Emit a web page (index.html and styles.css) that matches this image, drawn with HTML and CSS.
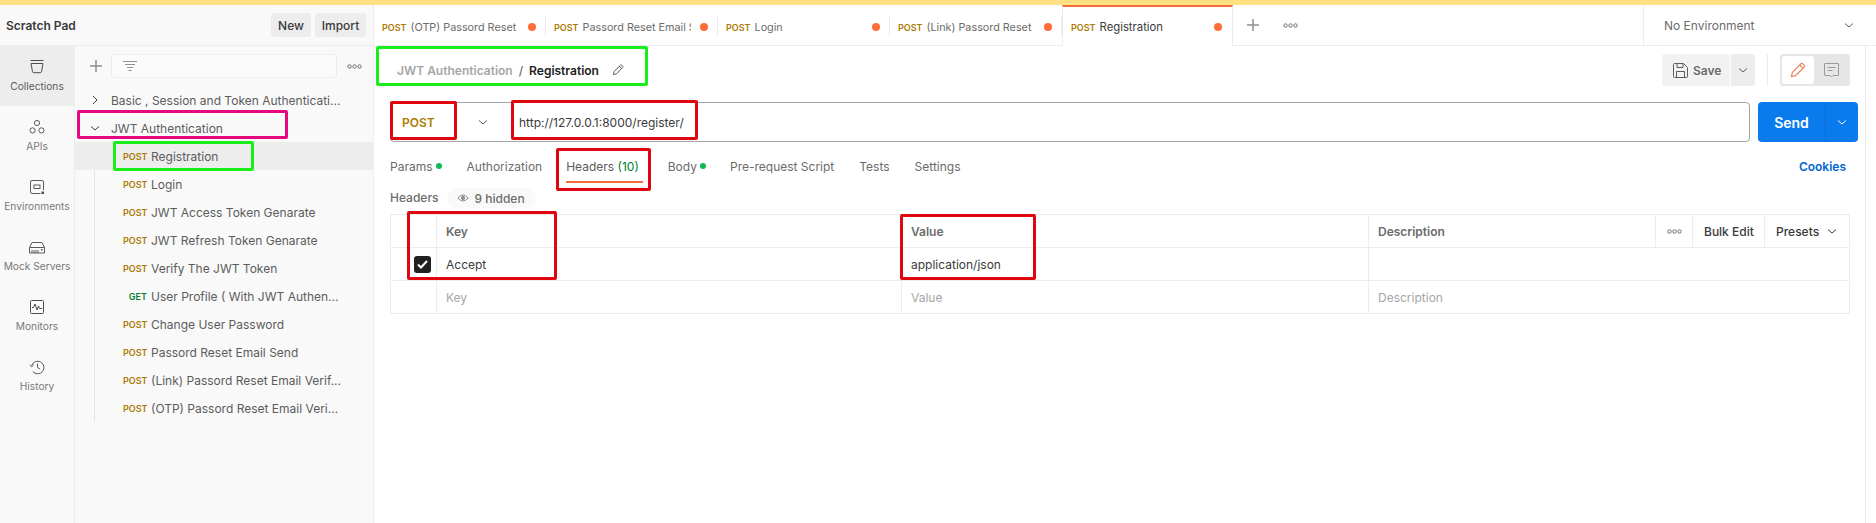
FILE: index.html
```html
<!DOCTYPE html>
<html lang="en">
<head>
    <meta charset="UTF-8">
    <meta name="viewport" content="width=device-width, initial-scale=1.0">
    <title>Scratch Pad</title>
    <link rel="stylesheet" href="styles.css">
</head>
<body>
    <div class="topbar"></div>

    <div class="app">
        <!-- Left column -->
        <div class="left">
            <div class="left-head">
                <span class="pad-title">Scratch Pad</span>
                <div class="head-btns">
                    <button class="btn-new">New</button>
                    <button class="btn-import">Import</button>
                </div>
            </div>
            <div class="left-body">
                <!-- Icon rail -->
                <div class="rail">
                    <div class="rail-item active">
                        <svg width="16" height="16" viewBox="0 0 16 16" fill="none" stroke="#4d4d4d"><path d="M1.5 1.5h13M2 4.5h12l-1.5 8.2q-.2 1-1.2 1H4.700q-1 0-1.200-1z"/></svg>
                        <span>Collections</span>
                    </div>
                    <div class="rail-item">
                        <svg width="16" height="16" viewBox="0 0 16 16" fill="none" stroke="#5c5c5c"><circle cx="8" cy="4" r="2.600"/><circle cx="3.600" cy="11.400" r="2.600"/><circle cx="12.400" cy="11.400" r="2.600"/></svg>
                        <span>APIs</span>
                    </div>
                    <div class="rail-item">
                        <svg width="16" height="16" viewBox="0 0 16 16" fill="none" stroke="#5c5c5c"><path d="M11.500 14.500H3q-1.500 0-1.500-1.500V3q0-1.500 1.500-1.500h10q1.500 0 1.500 1.500v8"/><rect x="5" y="6" width="6" height="3.500"/><rect x="12.500" y="12.500" width="2.500" height="2.500" fill="#4d4d4d" stroke="none"/></svg>
                        <span>Environments</span>
                    </div>
                    <div class="rail-item">
                        <svg width="16" height="16" viewBox="0 0 16 16" fill="none" stroke="#5c5c5c"><path d="M.5 8.500 3 3.500h10l2.500 5v5.500H.5zM.5 8.500h15M3 14v-3M5 14v-3M7 14v-3M9 14v-3"/><rect x="12" y="10" width="1.500" height="1.500" fill="#4d4d4d" stroke="none"/></svg>
                        <span>Mock Servers</span>
                    </div>
                    <div class="rail-item">
                        <svg width="16" height="16" viewBox="0 0 16 16" fill="none" stroke="#4d4d4d"><rect x="1.500" y="1.500" width="13" height="13" rx="1"/><path d="M3 8.500h1.500L6 5l2 6 1.500-4 1 2.500H13"/></svg>
                        <span>Monitors</span>
                    </div>
                    <div class="rail-item">
                        <svg width="16" height="16" viewBox="0 0 16 16" fill="none" stroke="#5c5c5c"><path d="M2.700 6.500A6.300 6.300 0 1 1 3.800 12.500M.8 5.800l1.900 1.900 1.900-1.900M8.500 4.500v4l2.500 1.500"/></svg>
                        <span>History</span>
                    </div>
                </div>

                <!-- Collections tree -->
                <div class="tree">
                    <div class="tree-tools">
                        <svg class="tree-plus" width="14" height="14" viewBox="0 0 14 14" stroke="#8f8f8f" stroke-width="1.500"><path d="M7 1v12M1 7h12"/></svg>
                        <div class="filter">
                            <svg width="14" height="14" viewBox="0 0 14 14" stroke="#8f8f8f"><path d="M0 2.500h14M2 5.500h10M4 8.500h6M5.500 11.500h3"/></svg>
                        </div>
                        <svg class="dots" width="15" height="5" viewBox="0 0 15 5" fill="none" stroke="#6b6b6b"><circle cx="2.500" cy="2.500" r="1.700"/><circle cx="7.500" cy="2.500" r="1.700"/><circle cx="12.500" cy="2.500" r="1.700"/></svg>
                    </div>
                    <div class="folder">
                        <svg width="10" height="10" viewBox="0 0 10 10" fill="none" stroke="#3d3d3d"><path d="M3 1l4 4-4 4"/></svg>
                        <span>Basic , Session and Token Authenticati...</span>
                    </div>
                    <div class="folder">
                        <svg width="10" height="10" viewBox="0 0 10 10" fill="none" stroke="#3d3d3d"><path d="M1 3.500l4 3.500 4-3.500"/></svg>
                        <span>JWT Authentication</span>
                    </div>
                    <div class="requests">
                        <div class="req selected"><span class="post">POST</span><span>Registration</span></div>
                        <div class="req"><span class="post">POST</span><span>Login</span></div>
                        <div class="req"><span class="post">POST</span><span>JWT Access Token Genarate</span></div>
                        <div class="req"><span class="post">POST</span><span>JWT Refresh Token Genarate</span></div>
                        <div class="req"><span class="post">POST</span><span>Verify The JWT Token</span></div>
                        <div class="req"><span class="get">GET</span><span>User Profile ( With JWT Authen...</span></div>
                        <div class="req"><span class="post">POST</span><span>Change User Password</span></div>
                        <div class="req"><span class="post">POST</span><span>Passord Reset Email Send</span></div>
                        <div class="req"><span class="post">POST</span><span>(Link) Passord Reset Email Verif...</span></div>
                        <div class="req"><span class="post">POST</span><span>(OTP) Passord Reset Email Veri...</span></div>
                    </div>
                </div>
            </div>
        </div>

        <!-- Right column -->
        <div class="right">
            <div class="tabbar">
                <div class="tab"><span class="post">POST</span><span class="tab-name">(OTP) Passord Reset</span><i class="dot"></i></div>
                <div class="tab"><span class="post">POST</span><span class="tab-name">Passord Reset Email Send</span><i class="dot"></i></div>
                <div class="tab"><span class="post">POST</span><span class="tab-name">Login</span><i class="dot"></i></div>
                <div class="tab"><span class="post">POST</span><span class="tab-name">(Link) Passord Reset Email</span><i class="dot"></i></div>
                <div class="tab tab-active"><span class="post">POST</span><span class="tab-name">Registration</span><i class="dot"></i></div>
                <svg class="tab-plus" width="14" height="14" viewBox="0 0 14 14" stroke="#8f8f8f" stroke-width="1.500"><path d="M7 1v12M1 7h12"/></svg>
                <svg class="tab-dots" width="15" height="5" viewBox="0 0 15 5" fill="none" stroke="#6b6b6b"><circle cx="2.500" cy="2.500" r="1.700"/><circle cx="7.500" cy="2.500" r="1.700"/><circle cx="12.500" cy="2.500" r="1.700"/></svg>
                <div class="env">
                    <span>No Environment</span>
                    <svg width="10" height="10" viewBox="0 0 10 10" fill="none" stroke="#5c5c5c"><path d="M1 3.500l4 3.500 4-3.500"/></svg>
                </div>
            </div>

            <div class="work">
                <div class="crumbs">
                    <div class="crumb-path">
                        <span class="crumb-parent">JWT Authentication</span>
                        <span class="crumb-sep">/</span>
                        <span class="crumb-name">Registration</span>
                        <svg width="12" height="12" viewBox="0 0 12 12" fill="none" stroke="#5c5c5c"><path d="M1.500 10.500l.6-3L8.500 1.200q.6-.5 1.200 0l1 1q.5.600 0 1.200L4.500 9.900zM7.500 2.300l2.200 2.200"/></svg>
                    </div>
                    <div class="crumb-actions">
                        <div class="save">
                            <svg width="15" height="15" viewBox="0 0 15 15" fill="none" stroke="#5c5c5c"><path d="M1.500.5h9l4 4v9q0 1-1 1h-12q-1 0-1-1v-12q0-1 1-1zM4 .5v4h6v-4M3.500 14.500v-6h8v6"/></svg>
                            <span>Save</span>
                        </div>
                        <div class="save-more">
                            <svg width="10" height="10" viewBox="0 0 10 10" fill="none" stroke="#5c5c5c"><path d="M1 3.500l4 3.500 4-3.500"/></svg>
                        </div>
                        <div class="vline"></div>
                        <div class="mode">
                            <div class="mode-on">
                                <svg width="16" height="16" viewBox="0 0 16 16" fill="none" stroke="#e8845c" stroke-width="1.200"><path d="M1.500 14.500l.8-4L11 1.700q.8-.7 1.600 0l1.700 1.700q.7.800 0 1.600L5.500 13.700zM9.800 3l3.200 3.200"/></svg>
                            </div>
                            <div class="mode-off">
                                <svg width="15" height="15" viewBox="0 0 15 15" fill="none" stroke="#9a9a9a"><path d="M1 .5h13q.5 0 .5.500v11q0 .5-.5.500H9L7.500 14 6 12.500H1q-.5 0-.5-.5V1q0-.5.500-.5zM3.500 4.500h8M3.500 7.500h5"/></svg>
                            </div>
                        </div>
                    </div>
                </div>

                <div class="urlrow">
                    <div class="urlbox">
                        <div class="method">
                            <span>POST</span>
                            <svg width="10" height="10" viewBox="0 0 10 10" fill="none" stroke="#5c5c5c"><path d="M1 3.500l4 3.500 4-3.500"/></svg>
                        </div>
                        <span class="url">http://127.0.0.1:8000/register/</span>
                    </div>
                    <div class="send">
                        <span class="send-label">Send</span>
                        <span class="send-more">
                            <svg width="10" height="10" viewBox="0 0 10 10" fill="none" stroke="#fff"><path d="M1 3.500l4 3.500 4-3.500"/></svg>
                        </span>
                    </div>
                </div>

                <div class="reqtabs">
                    <span class="rt rt-params">Params<i class="gdot"></i></span>
                    <span class="rt rt-auth">Authorization</span>
                    <span class="rt rt-headers">Headers <em>(10)</em></span>
                    <span class="rt rt-body">Body<i class="gdot"></i></span>
                    <span class="rt rt-pre">Pre-request Script</span>
                    <span class="rt rt-tests">Tests</span>
                    <span class="rt">Settings</span>
                    <span class="cookies">Cookies</span>
                </div>

                <div class="hdr-row">
                    <span class="hdr-label">Headers</span>
                    <span class="hidden-pill">
                        <svg width="12" height="12" viewBox="0 0 12 12" fill="none" stroke="#8f8f8f"><path d="M.8 6Q6 0 11.200 6 6 12 .8 6z"/><circle cx="6" cy="6" r="1.700" fill="#8f8f8f"/></svg>
                        9 hidden
                    </span>
                </div>

                <table class="kv">
                    <colgroup>
                        <col class="c-check"><col class="c-key"><col class="c-val"><col class="c-desc"><col class="c-dots"><col class="c-bulk"><col class="c-pre">
                    </colgroup>
                    <tr class="th">
                        <td></td>
                        <td>Key</td>
                        <td>Value</td>
                        <td>Description</td>
                        <td class="cell-dots"><svg width="15" height="5" viewBox="0 0 15 5" fill="none" stroke="#6b6b6b"><circle cx="2.500" cy="2.500" r="1.700"/><circle cx="7.500" cy="2.500" r="1.700"/><circle cx="12.500" cy="2.500" r="1.700"/></svg></td>
                        <td class="cell-act">Bulk Edit</td>
                        <td class="cell-act">Presets <svg width="10" height="10" viewBox="0 0 10 10" fill="none" stroke="#3d3d3d"><path d="M1 3.500l4 3.500 4-3.500"/></svg></td>
                    </tr>
                    <tr>
                        <td class="cell-check"><span class="check"><svg width="11" height="11" viewBox="0 0 11 11" fill="none" stroke="#fff" stroke-width="2"><path d="M1 5.500l3 3 6-6.500"/></svg></span></td>
                        <td>Accept</td>
                        <td>application/json</td>
                        <td colspan="4"></td>
                    </tr>
                    <tr class="ph">
                        <td></td>
                        <td>Key</td>
                        <td>Value</td>
                        <td colspan="4">Description</td>
                    </tr>
                </table>
            </div>
        </div>
    </div>

    <!-- Annotation boxes drawn over the screenshot -->
    <div class="mark green m-crumb"></div>
    <div class="mark pink m-folder"></div>
    <div class="mark green m-req"></div>
    <div class="mark red m-method"></div>
    <div class="mark red m-url"></div>
    <div class="mark red m-headers"></div>
    <div class="mark red m-key"></div>
    <div class="mark red m-value"></div>
</body>
</html>
```

FILE: styles.css
```css
/* Global Styles */
body {
    margin: 0;
    height: 523px;
    overflow: hidden;
    position: relative;
    background: #fff;
    font-family: Inter, "Noto Sans", sans-serif;
    font-size: 12px;
    color: #6b6b6b;
}

svg {
    display: block;
    flex: none;
}

.topbar {
    height: 5px;
    background: #ffe082;
}

.app {
    display: flex;
    height: 518px;
}

.post {
    color: #ad7a03;
    font-size: 9px;
    font-weight: 600;
}

.get {
    color: #007f31;
    font-size: 9px;
    font-weight: 600;
}

/* Left column */
.left {
    width: 373px;
    flex: none;
    display: flex;
    flex-direction: column;
    background: #f9f9f9;
    border-right: 1px solid #ededed;
}

.left-head {
    height: 40px;
    flex: none;
    display: flex;
    align-items: center;
    justify-content: space-between;
    padding: 0 7px 0 6px;
    border-bottom: 1px solid #ededed;
}

.pad-title {
    font-size: 12px;
    font-weight: 600;
    color: #3a3a3a;
}

.head-btns {
    display: flex;
    gap: 4px;
}

.head-btns button {
    height: 24px;
    padding: 0;
    border: none;
    border-radius: 3px;
    background: #ededed;
    color: #3a3a3a;
    font-family: inherit;
    font-size: 12px;
    font-weight: 500;
}

.btn-new {
    width: 40px;
}

.btn-import {
    width: 51px;
}

.left-body {
    flex: 1;
    display: flex;
}

.rail {
    width: 74px;
    flex: none;
    border-right: 1px solid #ededed;
}

.rail-item {
    height: 60px;
    display: flex;
    flex-direction: column;
    align-items: center;
    padding-top: 13px;
    box-sizing: border-box;
    gap: 5px;
    font-size: 10.2px;
    color: #7a7a7a;
}

.rail-item.active {
    background: #ededed;
    color: #5c5c5c;
}

.tree {
    flex: 1;
    min-width: 0;
}

.tree-tools {
    height: 40px;
    display: flex;
    align-items: flex-start;
    padding-top: 8px;
    box-sizing: border-box;
}

.tree-plus {
    margin: 5px 0 0 14px;
}

.filter {
    width: 226px;
    height: 24px;
    box-sizing: border-box;
    margin-left: 8px;
    padding: 4px 0 0 11px;
    border: 1px solid #ededed;
    border-radius: 3px;
    background: #fbfbfb;
}

.dots {
    margin: 10px 0 0 10px;
}

.folder {
    height: 28px;
    display: flex;
    align-items: center;
    padding-left: 15px;
    gap: 11px;
    font-size: 12px;
    color: #5c5c5c;
}

.requests {
    background: linear-gradient(#e6e6e6, #e6e6e6) 19px 0 / 1px 100% no-repeat;
}

.req {
    height: 28px;
    display: flex;
    align-items: center;
    gap: 4px;
    padding-left: 48px;
    font-size: 12px;
    color: #5c5c5c;
    white-space: nowrap;
}

.req .post,
.req .get {
    width: 24px;
    text-align: right;
}

.req.selected {
    background: #ededed;
}

/* Right column */
.right {
    flex: 1;
    min-width: 0;
    display: flex;
    flex-direction: column;
}

.tabbar {
    height: 40px;
    flex: none;
    display: flex;
    align-items: center;
    border-bottom: 1px solid #ededed;
}

.tab {
    width: 172px;
    height: 40px;
    flex: none;
    box-sizing: border-box;
    display: flex;
    align-items: center;
    padding: 4px 10px 0 8px;
    gap: 4px;
    position: relative;
    font-size: 10.8px;
}

.tab::after {
    content: "";
    position: absolute;
    right: 0;
    top: 11px;
    height: 20px;
    width: 1px;
    background: #ededed;
}

.tab-name {
    flex: 1;
    min-width: 0;
    overflow: hidden;
    white-space: nowrap;
    margin-right: 5px;
}

.dot {
    width: 8px;
    height: 8px;
    flex: none;
    border-radius: 50%;
    background: #ff6c37;
}

.tab-active {
    width: 171px;
    height: 41px;
    margin-bottom: -1px;
    padding-top: 1px;
    border-top: 2px solid #f26b3a;
    border-left: 1px solid #ededed;
    border-right: 1px solid #ededed;
    background: #fff;
    color: #3a3a3a;
    font-size: 11.3px;
}

.tab-active::after {
    display: none;
}

.tab-plus {
    margin-left: 13px;
}

.tab-dots {
    margin-left: 23px;
}

.env {
    margin-left: auto;
    width: 233px;
    height: 40px;
    box-sizing: border-box;
    display: flex;
    align-items: center;
    justify-content: space-between;
    padding: 0 22px 0 20px;
    border-left: 1px solid #ededed;
    font-size: 12px;
    color: #6b6b6b;
}

.work {
    flex: 1;
    margin-right: 10px;
    padding: 0 7px 0 16px;
    border-right: 1px solid #ededed;
}

.crumbs {
    height: 56px;
    display: flex;
    justify-content: space-between;
    padding-top: 8px;
    box-sizing: border-box;
}

.crumb-path {
    display: flex;
    align-items: center;
    height: 32px;
    padding-left: 7px;
    font-size: 12px;
    font-weight: 600;
}

.crumb-parent {
    color: #a6a6a6;
}

.crumb-sep {
    margin: 0 6px;
    color: #6b6b6b;
    font-weight: 500;
}

.crumb-name {
    color: #212121;
}

.crumb-path svg {
    margin-left: 13px;
}

.crumb-actions {
    display: flex;
    height: 32px;
    margin-right: 8px;
}

.save {
    width: 68px;
    display: flex;
    align-items: center;
    gap: 5px;
    padding-left: 11px;
    box-sizing: border-box;
    background: #f2f2f2;
    border-radius: 3px 0 0 3px;
    font-size: 12px;
    font-weight: 600;
}

.save-more {
    width: 24px;
    margin-left: 1px;
    display: flex;
    align-items: center;
    justify-content: center;
    background: #ededed;
    border-radius: 0 3px 3px 0;
}

.vline {
    width: 1px;
    margin: 0 12px;
    background: #ededed;
}

.mode {
    width: 70px;
    display: flex;
    box-sizing: border-box;
    padding: 2px;
    background: #e6e6e6;
    border-radius: 3px;
}

.mode-on {
    width: 32px;
    display: flex;
    align-items: center;
    justify-content: center;
    background: #fff;
    border-radius: 3px;
}

.mode-off {
    flex: 1;
    display: flex;
    align-items: center;
    justify-content: center;
}

.urlrow {
    display: flex;
    gap: 8px;
    height: 40px;
}

.urlbox {
    flex: 1;
    display: flex;
    align-items: center;
    border: 1px solid #a6a6a6;
    border-radius: 4px;
    color: #212121;
}

.method {
    width: 128px;
    flex: none;
    box-sizing: border-box;
    display: flex;
    align-items: center;
    justify-content: space-between;
    padding: 0 31px 0 11px;
    color: #ad7a03;
    font-size: 12px;
    font-weight: 600;
}

.url {
    font-size: 12px;
    color: #3a3a3a;
}

.send {
    width: 100px;
    flex: none;
    display: flex;
    background: #097bed;
    border-radius: 4px;
    color: #fff;
    font-size: 14px;
    font-weight: 600;
}

.send-label {
    width: 67px;
    display: flex;
    align-items: center;
    justify-content: center;
    border-right: 1px solid #0a6fd4;
}

.send-more {
    flex: 1;
    display: flex;
    align-items: center;
    justify-content: center;
}

.reqtabs {
    height: 46px;
    display: flex;
    align-items: center;
    padding-top: 2px;
    box-sizing: border-box;
}

.rt {
    display: flex;
    align-items: center;
    font-size: 12px;
    white-space: pre;
    margin-right: 25px;
}

.rt-params {
    margin-right: 25px;
}

.rt-auth {
    margin-right: 24px;
}

.rt-headers {
    margin-right: 29px;
    position: relative;
    color: #5c5c5c;
}

.rt-headers::after {
    content: "";
    position: absolute;
    left: 0;
    right: -4px;
    top: 22px;
    height: 2px;
    background: #f26b3a;
}

.rt-headers em {
    font-style: normal;
    color: #007f31;
}

.rt-body {
    margin-right: 24px;
}

.gdot {
    width: 6px;
    height: 6px;
    margin-left: 3px;
    border-radius: 50%;
    background: #0cbb52;
}

.cookies {
    margin-left: auto;
    margin-right: 12px;
    font-weight: 600;
    color: #0265d2;
}

.hdr-row {
    height: 26px;
    display: flex;
    align-items: flex-start;
    gap: 8px;
    font-size: 12px;
}

.hdr-label {
    line-height: 20px;
    font-weight: 500;
}

.hidden-pill {
    height: 20px;
    padding: 0 11px 0 10px;
    display: flex;
    align-items: center;
    gap: 6px;
    background: #f9f9f9;
    border-radius: 10px;
    font-weight: 500;
}

/* Key / value table */
.kv {
    width: 1459px;
    table-layout: fixed;
    border-collapse: collapse;
    font-size: 12px;
}

.c-check { width: 46px; }
.c-key { width: 465px; }
.c-val { width: 467px; }
.c-desc { width: 287px; }
.c-dots { width: 37px; }
.c-bulk { width: 72px; }
.c-pre { width: 85px; }

.kv td {
    height: 32px;
    padding: 0 0 0 9px;
    border: 1px solid #ededed;
    color: #3a3a3a;
}

.kv .th td {
    font-weight: 600;
    color: #6b6b6b;
}

.kv .th .cell-act {
    padding-left: 11px;
    color: #3a3a3a;
    font-weight: 500;
}

.kv .th .cell-act svg {
    display: inline-block;
    margin-left: 5px;
}

.kv .th .cell-dots {
    padding-left: 11px;
}

.kv .ph td {
    color: #a6a6a6;
}

.kv .cell-check {
    padding-left: 23px;
}

.check {
    width: 17px;
    height: 17px;
    display: flex;
    align-items: center;
    justify-content: center;
    background: #212121;
    border-radius: 3px;
}

/* Annotations */
.mark {
    position: absolute;
    box-sizing: border-box;
    border-width: 3px;
    border-style: solid;
    border-radius: 2px;
}

.red { border-color: #e0060f; }
.green { border-color: #1aee1a; }
.pink { border-color: #e5097f; }

.m-crumb { left: 376px; top: 46px; width: 272px; height: 40px; }
.m-folder { left: 77px; top: 110px; width: 211px; height: 29px; }
.m-req { left: 113px; top: 141px; width: 141px; height: 30px; }
.m-method { left: 390px; top: 101px; width: 67px; height: 39px; }
.m-url { left: 511px; top: 100px; width: 187px; height: 40px; }
.m-headers { left: 556px; top: 148px; width: 95px; height: 43px; }
.m-key { left: 407px; top: 211px; width: 150px; height: 69px; }
.m-value { left: 900px; top: 214px; width: 136px; height: 66px; }
```
